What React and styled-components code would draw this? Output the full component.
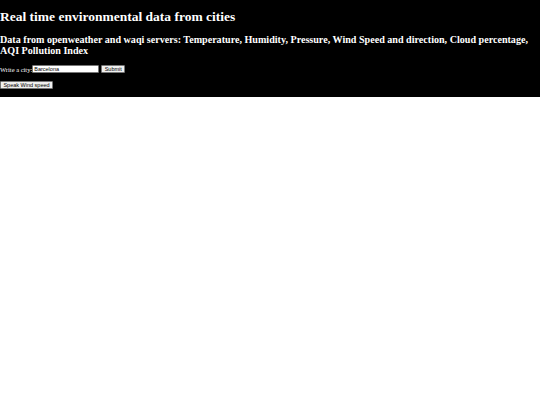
import styled, { createGlobalStyle } from "styled-components"

const Global = createGlobalStyle`
  body {
    margin: 0;
    background: #fff;
    font-family: "Liberation Serif", "Times New Roman", serif;
  }
`

const Header = styled.header`
  background-color: #000;
  color: #fff;
  padding: 9px 0 8px;
`

const Title = styled.h1`
  font-size: 13.5px;
  margin: 0;
`

const Subtitle = styled.h2`
  font-size: 10.1px;
  margin: 8.8px 0 9.6px;
`

const Row = styled.div`
  display: flex;
  align-items: center;
  font-size: 6.5px;
  height: 8px;
  margin-bottom: ${p => p.$gap || 0}px;
`

const Input = styled.input`
  width: 67px;
  height: 8px;
  box-sizing: border-box;
  font-size: 5.5px;
  font-family: "Liberation Sans", Arial, sans-serif;
  padding: 0 1px;
  margin: 0 2px 0 0;
  border: 1px solid #767676;
  border-radius: 1px;
`

const Button = styled.button`
  font-family: "Liberation Sans", Arial, sans-serif;
  font-size: 5.5px;
  height: 8px;
  padding: 0;
  line-height: 6px;
  color: #000;
  background: #efefef;
  border: 1px solid #767676;
  border-radius: 1px;
  margin: 0;
  width: ${p => p.$w}px;
`

export default function App() {
  return (
    <>
      <Global />
      <Header>
        <Title>Real time environmental data from cities</Title>
        <Subtitle>
          Data from openweather and waqi servers: Temperature, Humidity, Pressure, Wind Speed and direction, Cloud percentage, AQI Pollution Index
        </Subtitle>
        <Row $gap={8}>
          <label>Write a city:</label>
          <Input defaultValue="Barcelona" />
          <Button $w={24}>Submit</Button>
        </Row>
        <Row>
          <Button $w={53}>Speak Wind speed</Button>
        </Row>
      </Header>
    </>
  )
}
